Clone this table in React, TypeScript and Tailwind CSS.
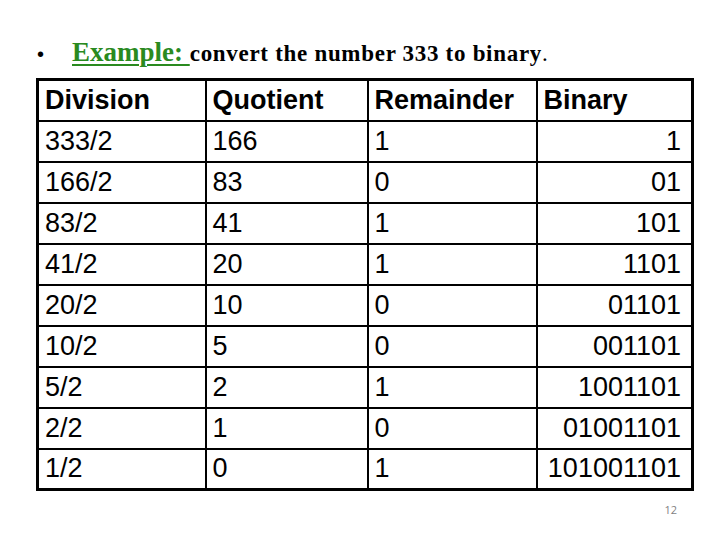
const rows = [
  ["333/2", "166", "1", "1"],
  ["166/2", "83", "0", "01"],
  ["83/2", "41", "1", "101"],
  ["41/2", "20", "1", "1101"],
  ["20/2", "10", "0", "01101"],
  ["10/2", "5", "0", "001101"],
  ["5/2", "2", "1", "1001101"],
  ["2/2", "1", "0", "01001101"],
  ["1/2", "0", "1", "101001101"],
]

export default function App() {
  return (
    <div className="w-[720px] h-[540px] bg-white overflow-hidden">
      {/* Title */}
      <div className="h-[78px] pt-[39px] pl-[37px] flex items-baseline leading-none font-['Liberation_Serif',serif] font-bold text-black">
        <span className="w-[35px] text-[20px] font-['Liberation_Sans',sans-serif] font-normal">•</span>
        <span className="text-[27px] text-[#2a8a1f] underline decoration-[2px] underline-offset-[3px]">Example:&nbsp;</span>
        <span className="text-[23px] tracking-[0.7px]">convert the number 333 to binary</span>
        <span className="text-[23px] font-normal">.</span>
      </div>

      {/* Table */}
      <table className="ml-[36px] w-[655px] table-fixed border-collapse border-[3px] border-black font-['Liberation_Sans',Arial,sans-serif] text-[27px] leading-none text-black">
        <colgroup>
          <col className="w-[168px]" />
          <col className="w-[162px]" />
          <col className="w-[169px]" />
          <col className="w-[156px]" />
        </colgroup>
        <thead>
          <tr className="h-[41px]">
            <th className="border-2 border-black pl-[6px] text-left font-bold">Division</th>
            <th className="border-2 border-black pl-[6px] text-left font-bold">Quotient</th>
            <th className="border-2 border-black pl-[6px] text-left font-bold">Remainder</th>
            <th className="border-2 border-black pl-[6px] text-left font-bold">Binary</th>
          </tr>
        </thead>
        <tbody>
          {rows.map((r) => (
            <tr key={r[0]} className="h-[41px]">
              <td className="border-2 border-black pl-[6px]">{r[0]}</td>
              <td className="border-2 border-black pl-[6px]">{r[1]}</td>
              <td className="border-2 border-black pl-[6px]">{r[2]}</td>
              <td className="border-2 border-black pr-[10px] text-right">{r[3]}</td>
            </tr>
          ))}
        </tbody>
      </table>

      {/* Page number */}
      <div className="flex justify-end pr-[43px] mt-[11px] text-[11px] text-[#7f7f7f] font-['Open_Sans',sans-serif]">
        12
      </div>
    </div>
  )
}
